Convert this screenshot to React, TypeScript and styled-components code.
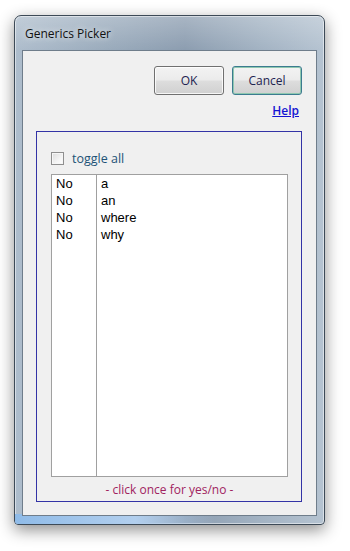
import { Fragment } from 'react';
import styled, { createGlobalStyle } from 'styled-components';

const GlobalStyle = createGlobalStyle`
  html, body {
    margin: 0;
    padding: 0;
    background: #ffffff;
  }
`;

const Page = styled.div`
  width: 350px;
  height: 551px;
  padding: 15px 0 0 14px;
  box-sizing: border-box;
`;

const Window = styled.div`
  width: 311px;
  height: 510px;
  box-sizing: border-box;
  display: flex;
  flex-direction: column;
  border: 1px solid #3d4a57;
  border-radius: 7px 7px 4px 4px;
  background:
    linear-gradient(180deg, rgba(255, 255, 255, 0.25) 0%, rgba(255, 255, 255, 0) 34px),
    linear-gradient(90deg, #aebdcc 0%, #9aabbc 30%, #8c9db0 55%, #a3b3c3 80%, #b5c3d1 100%);
  box-shadow: 0 5px 16px rgba(0, 0, 0, 0.45), inset 0 0 0 1px rgba(255, 255, 255, 0.5);
  padding: 0 7px 8px;
  position: relative;
  overflow: hidden;

  &::after {
    content: '';
    position: absolute;
    left: 0;
    bottom: 0;
    width: 200px;
    height: 10px;
    background: linear-gradient(90deg, #8fbbe8 0%, #b2cfee 60%, rgba(178, 207, 238, 0) 100%);
  }
`;

const TitleBar = styled.div`
  height: 34px;
  display: flex;
  align-items: center;
  padding-left: 3px;
  font-family: "Open Sans", "Noto Sans", sans-serif;
  font-size: 12px;
  color: #111111;
  text-shadow: 0 0 6px rgba(255, 255, 255, 0.9);
`;

const Client = styled.div`
  flex: 1;
  position: relative;
  z-index: 1;
  background: #f0f0f0;
  border: 1px solid #6f7d8b;
  display: flex;
  flex-direction: column;
  padding: 15px 14px 13px 13px;
  font-family: "Liberation Sans", Arial, sans-serif;
`;

const ButtonRow = styled.div`
  display: flex;
  justify-content: flex-end;
  gap: 8px;
`;

const Button = styled.button<{ $focused?: boolean }>`
  width: 70px;
  height: 29px;
  padding: 0;
  border: 1px solid ${({ $focused }) => ($focused ? '#3b7b8f' : '#707070')};
  border-radius: 3px;
  background: linear-gradient(180deg, #f3f3f3 0%, #ebebeb 48%, #dddddd 52%, #d0d0d0 100%);
  box-shadow: inset 0 0 0 1px ${({ $focused }) => ($focused ? '#8fc8b0' : 'rgba(255,255,255,0.8)')};
  font-family: "Open Sans", "Noto Sans", sans-serif;
  font-size: 12px;
  color: #1d2350;
`;

const HelpRow = styled.div`
  display: flex;
  justify-content: flex-end;
  padding: 7px 3px 0 0;
  height: 20px;
`;

const HelpLink = styled.a`
  font-family: "Open Sans", "Noto Sans", sans-serif;
  font-size: 12px;
  font-weight: 600;
  color: #1414d2;
  text-decoration: underline;
  cursor: pointer;
`;

const GroupBox = styled.div`
  margin-top: 9px;
  flex: 1;
  border: 1px solid #3333a6;
  display: flex;
  flex-direction: column;
  padding: 18px 13px 0 14px;
`;

const ToggleRow = styled.label`
  display: flex;
  align-items: center;
  gap: 8px;
  height: 16px;
  font-family: "Open Sans", "Noto Sans", sans-serif;
  font-size: 12.5px;
  color: #1d5377;
`;

const Box = styled.span`
  width: 11px;
  height: 11px;
  border: 1px solid #8f8f8f;
  background: linear-gradient(135deg, #dcdcdc 0%, #f4f4f4 60%, #ffffff 100%);
  box-shadow: inset 0 0 0 1px #f6f6f6;
`;

const List = styled.div`
  margin-top: 8px;
  flex: 1;
  background: #ffffff;
  border: 1px solid #a0a0a0;
  display: grid;
  grid-template-columns: 44px 1fr;
  grid-auto-rows: 17px;
  align-content: start;
  position: relative;

  &::before {
    content: '';
    position: absolute;
    left: 44px;
    top: 0;
    bottom: 0;
    border-left: 1px solid #a0a0a0;
  }
`;

const Cell = styled.div<{ $second?: boolean }>`
  font-size: 13px;
  line-height: 17px;
  color: #000;
  padding-left: ${({ $second }) => ($second ? '5px' : '4px')};
`;

const Footer = styled.div`
  height: 24px;
  display: flex;
  align-items: center;
  justify-content: center;
  font-family: "Open Sans", "Noto Sans", sans-serif;
  font-size: 12px;
  color: #a0235f;
`;

const rows = [
  ['No', 'a'],
  ['No', 'an'],
  ['No', 'where'],
  ['No', 'why'],
];

export default function App() {
  return (
    <Page>
      <GlobalStyle />
      <Window>
        <TitleBar>Generics Picker</TitleBar>
        <Client>
          <ButtonRow>
            <Button>OK</Button>
            <Button $focused>Cancel</Button>
          </ButtonRow>
          <HelpRow>
            <HelpLink>Help</HelpLink>
          </HelpRow>
          <GroupBox>
            <ToggleRow>
              <Box />
              toggle all
            </ToggleRow>
            <List>
              {rows.map(([state, word]) => (
                <Fragment key={word}>
                  <Cell>{state}</Cell>
                  <Cell $second>{word}</Cell>
                </Fragment>
              ))}
            </List>
            <Footer>- click once for yes/no -</Footer>
          </GroupBox>
        </Client>
      </Window>
    </Page>
  );
}
